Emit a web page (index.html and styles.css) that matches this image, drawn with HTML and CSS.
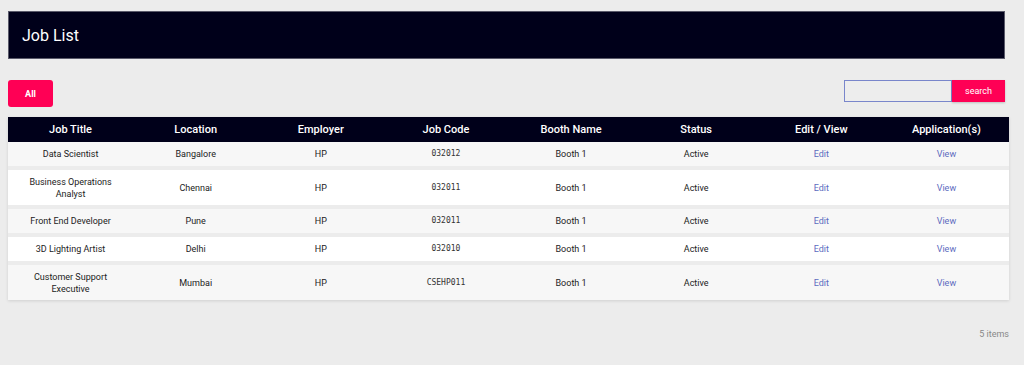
FILE: index.html
```html
<!DOCTYPE html>
<html>
<head>
<meta charset="utf-8">
<link rel="stylesheet" href="styles.css">
</head>
<body>
<div class="page">
  <div class="titlebar"><h1>Job List</h1></div>
  <div class="toolbar">
    <button class="btn-all">All</button>
    <div class="search">
      <input type="text" class="search-input">
      <button class="btn-search">search</button>
    </div>
  </div>
  <div class="grid">
    <div class="row head">
      <div class="cell">Job Title</div><div class="cell">Location</div><div class="cell">Employer</div><div class="cell">Job Code</div><div class="cell">Booth Name</div><div class="cell">Status</div><div class="cell">Edit / View</div><div class="cell">Application(s)</div>
    </div>
    <div class="row odd">
      <div class="cell">Data Scientist</div><div class="cell">Bangalore</div><div class="cell">HP</div><div class="cell mono">032012</div><div class="cell">Booth 1</div><div class="cell">Active</div><div class="cell link">Edit</div><div class="cell link">View</div>
    </div>
    <div class="row even tall">
      <div class="cell">Business Operations Analyst</div><div class="cell">Chennai</div><div class="cell">HP</div><div class="cell mono">032011</div><div class="cell">Booth 1</div><div class="cell">Active</div><div class="cell link">Edit</div><div class="cell link">View</div>
    </div>
    <div class="row odd">
      <div class="cell">Front End Developer</div><div class="cell">Pune</div><div class="cell">HP</div><div class="cell mono">032011</div><div class="cell">Booth 1</div><div class="cell">Active</div><div class="cell link">Edit</div><div class="cell link">View</div>
    </div>
    <div class="row even">
      <div class="cell">3D Lighting Artist</div><div class="cell">Delhi</div><div class="cell">HP</div><div class="cell mono">032010</div><div class="cell">Booth 1</div><div class="cell">Active</div><div class="cell link">Edit</div><div class="cell link">View</div>
    </div>
    <div class="row odd tall">
      <div class="cell">Customer Support Executive</div><div class="cell">Mumbai</div><div class="cell">HP</div><div class="cell mono">CSEHP011</div><div class="cell">Booth 1</div><div class="cell">Active</div><div class="cell link">Edit</div><div class="cell link">View</div>
    </div>
  </div>
  <div class="footer">5 items</div>
</div>
</body>
</html>
```

FILE: styles.css
```css
html, body {
  margin: 0;
  padding: 0;
  background: #ececec;
  font-family: Roboto, "Liberation Sans", Arial, sans-serif;
}
.page {
  width: 1001px;
  padding: 11px 0 0 8px;
}
.titlebar {
  background: #00001a;
  border: 1px solid #5a5a6a;
  display: flex;
  align-items: center;
  padding-left: 13px;
  box-sizing: border-box;
  width: 997px;
  height: 48px;
}
.titlebar h1 {
  margin: 0;
  font-size: 16px;
  font-weight: 400;
  color: #ffffff;
}
.toolbar {
  width: 997px;
  margin-top: 21px;
  display: flex;
  justify-content: space-between;
  align-items: flex-start;
}
.btn-all {
  width: 45px;
  height: 27px;
  border: none;
  border-radius: 3px;
  background: #ff0055;
  color: #fff;
  font-family: Roboto, "Liberation Sans", Arial, sans-serif;
  font-size: 9px;
  font-weight: 700;
  padding: 0;
}
.search {
  display: flex;
}
.search-input {
  width: 108px;
  height: 22px;
  box-sizing: border-box;
  border: 1px solid #7986cb;
  background: #ededed;
  margin: 0;
  padding: 0 4px;
}
.btn-search {
  width: 53px;
  height: 22px;
  border: none;
  background: #ff0055;
  color: #fff;
  font-family: Roboto, "Liberation Sans", Arial, sans-serif;
  font-size: 9px;
  padding: 0;
  margin: 0;
  box-shadow: 0 1px 2px rgba(0,0,0,0.2);
}
.grid {
  margin-top: 10px;
  width: 1001px;
  display: flex;
  flex-direction: column;
  gap: 4px;
  box-shadow: 0 1px 3px rgba(0,0,0,0.12);
  background: #ececec;
}
.row {
  display: grid;
  grid-template-columns: repeat(8, 1fr);
  align-items: center;
  height: 24px;
}
.row.tall {
  height: 35px;
}
.row.head {
  background: #00001a;
  height: 25px;
  margin-bottom: -4px;
}
.row.odd { background: #f7f7f7; }
.row.even { background: #ffffff; }
.cell {
  text-align: center;
  font-size: 9px;
  line-height: 12px;
  color: #222;
  padding: 0 14px;
}
.head .cell {
  color: #ffffff;
  font-size: 11px;
  font-weight: 500;
}
.cell.mono {
  font-family: "DejaVu Sans Mono", monospace;
  font-size: 8px;
  color: #333;
}
.cell.link {
  color: #5c6bc0;
}
.footer {
  margin-top: 29px;
  width: 1001px;
  text-align: right;
  font-size: 9px;
  color: #888;
}
```
